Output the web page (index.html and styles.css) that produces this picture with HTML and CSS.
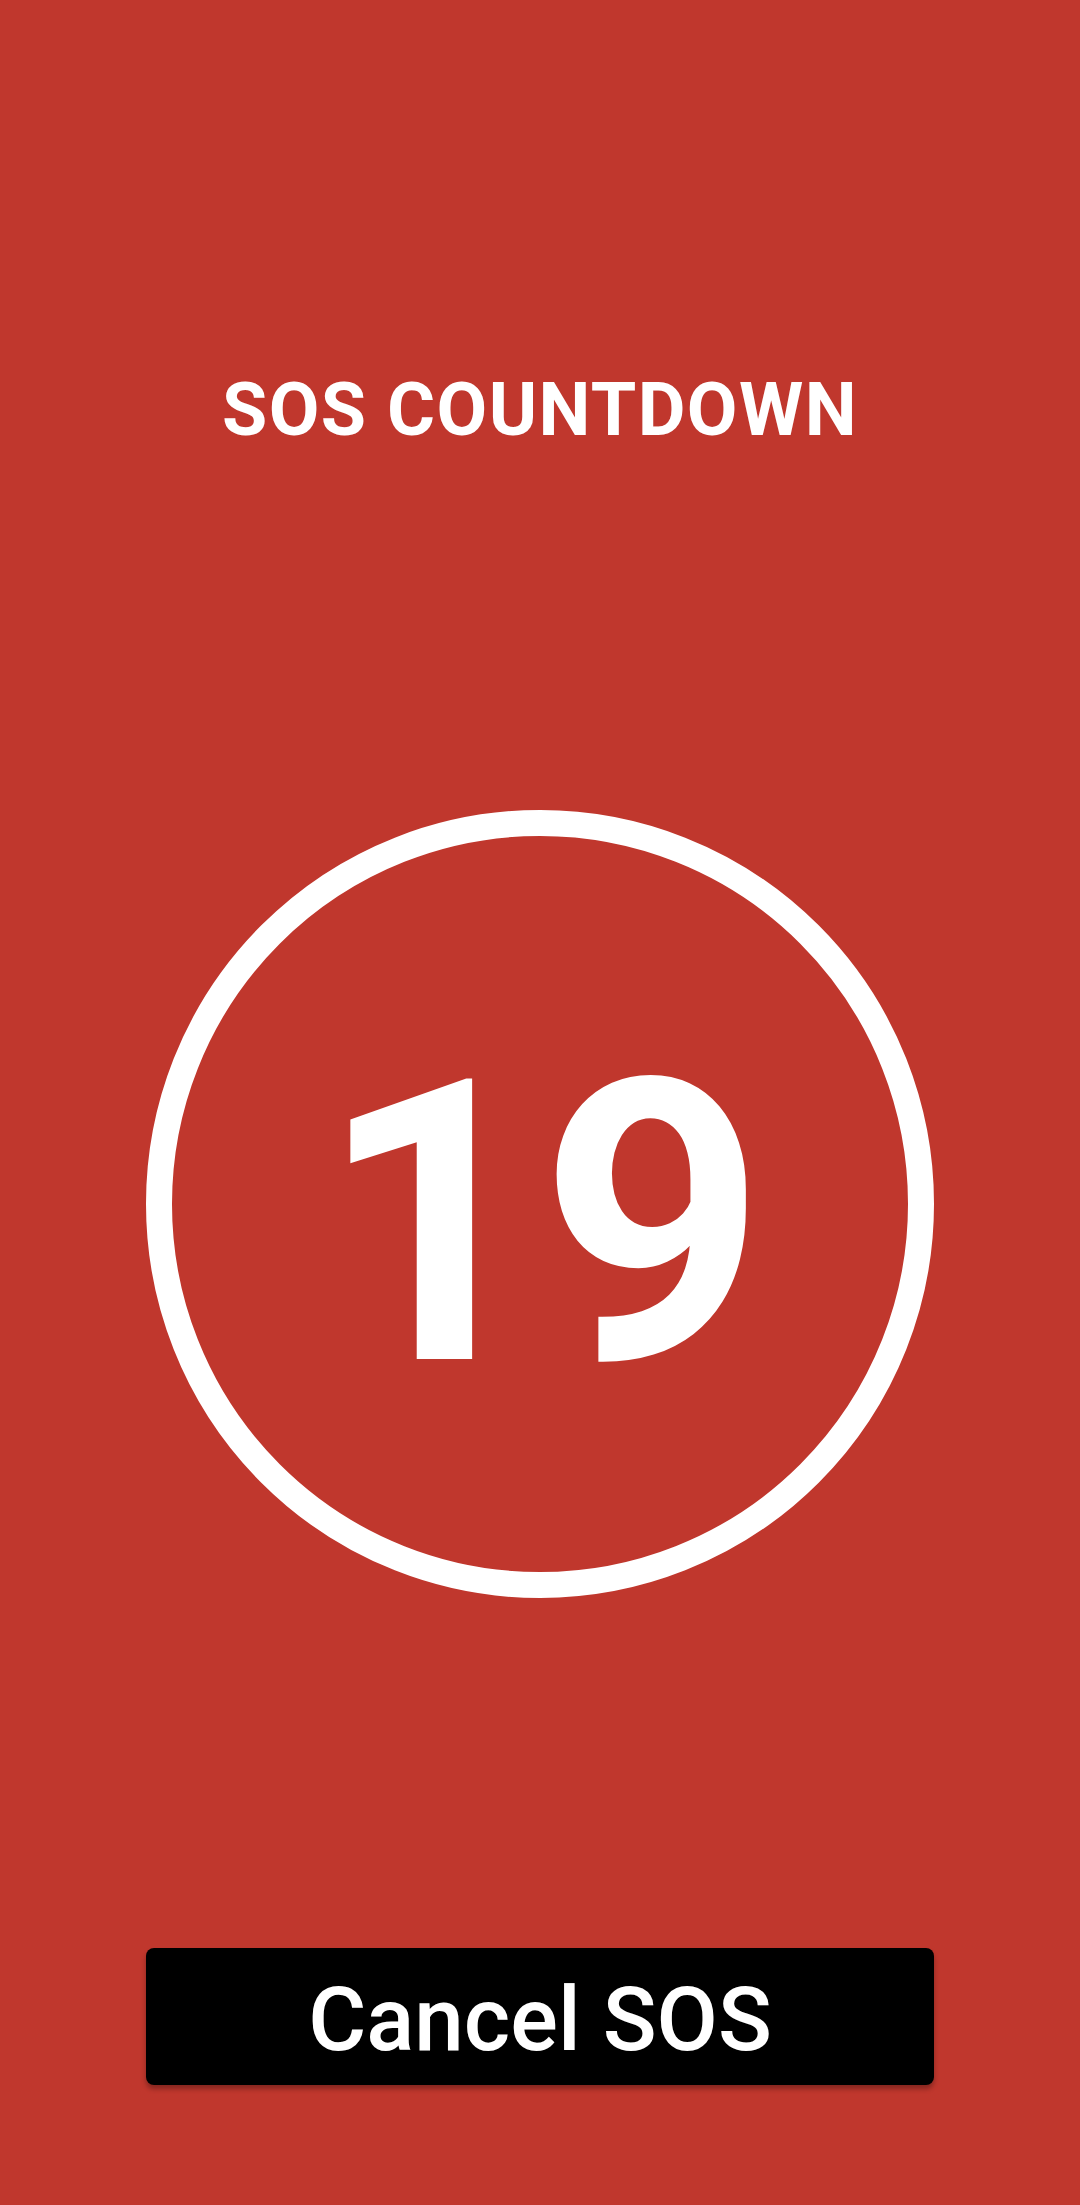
FILE: index.html
```html
<!DOCTYPE html>
<html lang="en">
<head>
<meta charset="utf-8">
<title>SOS Countdown</title>
<link rel="stylesheet" href="styles.css">
</head>
<body>
<main class="screen">
  <h1 class="title">SOS COUNTDOWN</h1>
  <div class="ring">
    <span class="count">19</span>
  </div>
  <button class="cancel" type="button">Cancel SOS</button>
</main>
</body>
</html>
```
FILE: styles.css
```css
html, body {
  margin: 0;
  padding: 0;
  background: #c0372d;
}

.screen {
  box-sizing: border-box;
  width: 1080px;
  height: 2205px;
  padding-top: 367px;
  display: flex;
  flex-direction: column;
  align-items: center;
  font-family: Roboto, "Liberation Sans", sans-serif;
  color: #ffffff;
}

.title {
  margin: 0;
  font-size: 73.5px;
  line-height: normal;
  font-weight: 700;
  letter-spacing: 1.4px;
}

.ring {
  box-sizing: border-box;
  margin-top: 357px;
  width: 787.5px;
  height: 787.5px;
  border: 26px solid #ffffff;
  border-radius: 50%;
  display: flex;
  align-items: center;
  justify-content: center;
}

.count {
  font-size: 394px;
  font-weight: 700;
  line-height: normal;
  letter-spacing: -4px;
  padding-top: 40px;
}

.cancel {
  margin-top: 350px;
  width: 787.5px;
  height: 137px;
  border: none;
  border-radius: 8px;
  background: #000000;
  color: #ffffff;
  font-family: Roboto, "Liberation Sans", sans-serif;
  font-size: 89px;
  font-weight: 500;
  line-height: normal;
  padding: 6px 0 0 0;
  display: flex;
  align-items: center;
  justify-content: center;
  box-shadow: 0 4px 5px rgba(0, 0, 0, 0.3);
}
```
